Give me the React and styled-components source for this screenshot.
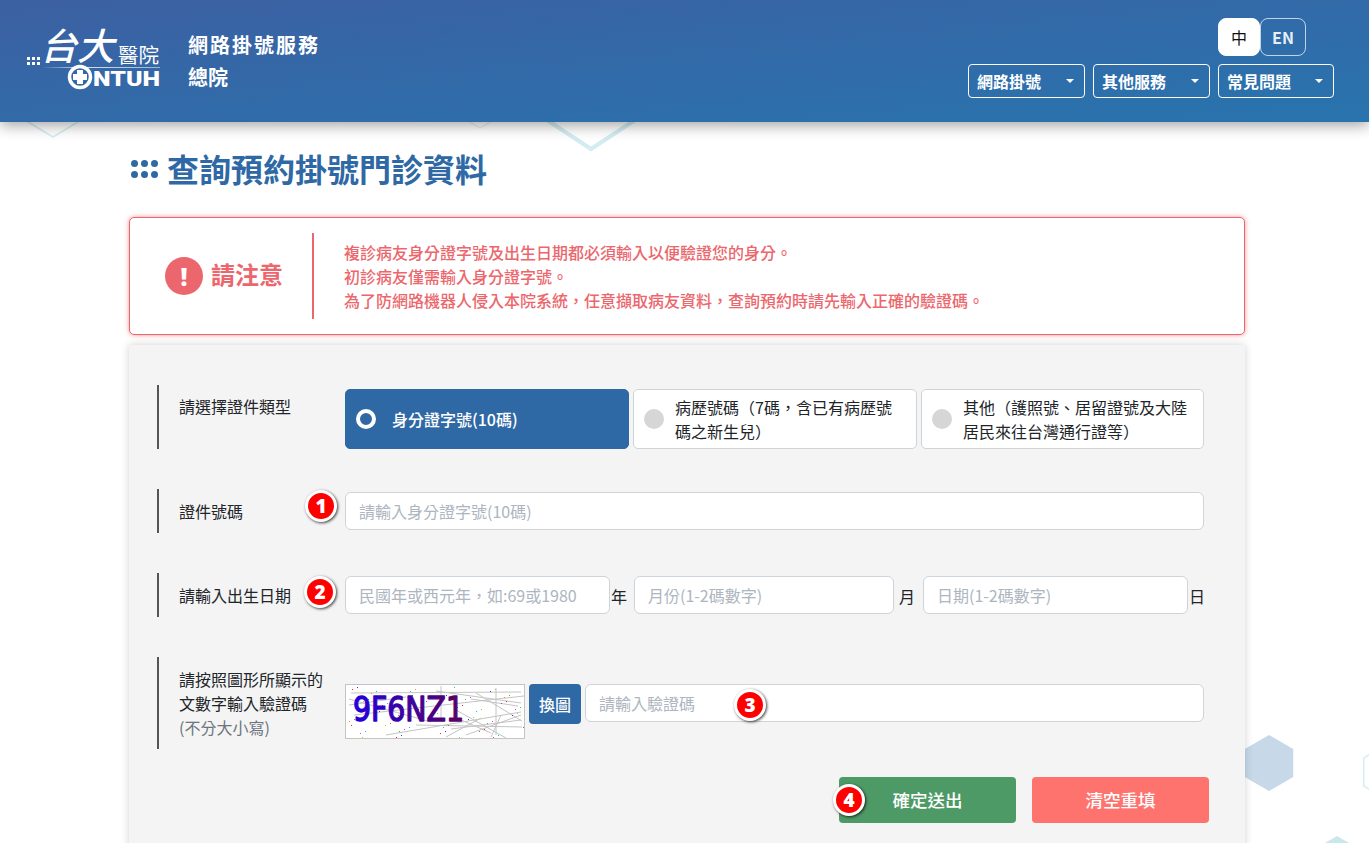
import React from "react";
import styled, { createGlobalStyle } from "styled-components";

const Global = createGlobalStyle`
  html, body { margin: 0; padding: 0; background: #fff; overflow: hidden; }
  * { box-sizing: border-box; }
  body { font-family: "Noto Sans CJK TC", "Noto Sans", sans-serif; color: #212529; }
`;

const Page = styled.div`
  position: relative;
  height: 843px;
  overflow: hidden;
  background: #fff;
`;

const Deco = styled.svg`
  position: absolute;
  left: 0;
  top: 0;
  width: 1369px;
  height: 843px;
`;

const Header = styled.header`
  position: relative;
  z-index: 2;
  height: 122px;
  display: flex;
  justify-content: space-between;
  background: linear-gradient(175deg, #3c60a2 0%, #2874ae 100%);
  box-shadow: 0 3px 14px rgba(0, 0, 0, 0.38);
  padding: 18px 35px 0 27px;
`;

const Brand = styled.div`
  display: flex;
  align-items: flex-start;
  gap: 28px;
`;

const LogoSvg = styled.svg`
  width: 133px;
  height: 72px;
  flex: none;
  overflow: visible;
`;

const SiteName = styled.div`
  color: #fff;
  font-size: 20px;
  font-weight: 700;
  line-height: 32px;
  padding-top: 11px;
`;

const SiteLine = styled.div`
  letter-spacing: ${(p) => p.$ls ?? 0}px;
`;

const HeaderRight = styled.div`
  display: flex;
  flex-direction: column;
  align-items: flex-end;
  gap: 8px;
`;

const Lang = styled.div`
  display: flex;
  width: 116px;
`;

const LangButton = styled.div`
  height: 38px;
  width: ${(p) => (p.$active ? 42 : 46)}px;
  display: flex;
  align-items: center;
  justify-content: center;
  font-size: 16px;
  font-weight: ${(p) => (p.$active ? 400 : 700)};
  border-radius: 8px;
  color: ${(p) => (p.$active ? "#111" : "#e6edf6")};
  background: ${(p) => (p.$active ? "#fff" : "transparent")};
  border: 1px solid ${(p) => (p.$active ? "#fff" : "rgba(255,255,255,.7)")};
`;

const Menus = styled.nav`
  display: flex;
  gap: 8px;
`;

const Menu = styled.div`
  width: ${(p) => p.$w}px;
  height: 34px;
  border: 1px solid #fff;
  border-radius: 4px;
  display: flex;
  align-items: center;
  justify-content: space-between;
  padding: 0 10px 0 8px;
  color: #fff;
  font-size: 16px;
  font-weight: 700;
`;

const Caret = styled.i`
  width: 0;
  height: 0;
  border-left: 4px solid transparent;
  border-right: 4px solid transparent;
  border-top: 4px solid #fff;
`;

const Main = styled.main`
  position: relative;
  z-index: 1;
  width: 1116px;
  margin-left: 129px;
`;

const TitleRow = styled.div`
  display: flex;
  align-items: center;
  gap: 9px;
  height: 95px;
  padding: 0 0 4px 2px;
`;

const TitleDots = styled.div`
  display: grid;
  grid-template-columns: repeat(3, 7px);
  column-gap: 3px;
  row-gap: 4px;
  margin-top: 3px;
`;

const TitleDot = styled.span`
  width: 7px;
  height: 7px;
  border-radius: 50%;
  background: #2f69a5;
`;

const Title = styled.h1`
  margin: 0;
  font-size: 32px;
  line-height: 40px;
  font-weight: 700;
  color: #2f69a5;
`;

const Alert = styled.section`
  height: 118px;
  background: #fff;
  border: 1px solid #ec666d;
  border-radius: 5px;
  box-shadow: 0 0 5px rgba(236, 102, 109, 0.7);
  display: flex;
  align-items: center;
  padding-left: 35px;
`;

const AlertHead = styled.div`
  width: 147px;
  height: 84px;
  display: flex;
  align-items: center;
  gap: 8px;
  flex: none;
`;

const AlertIcon = styled.div`
  width: 38px;
  height: 38px;
  border-radius: 50%;
  background: #ec676d;
  color: #fff;
  font-size: 24px;
  font-weight: 900;
  display: flex;
  align-items: center;
  justify-content: center;
  flex: none;
  font-family: "Noto Sans", sans-serif;
`;

const AlertTitle = styled.div`
  color: #ec676d;
  font-size: 24px;
  font-weight: 700;
  line-height: 1;
  margin-top: -4px;
`;

const AlertBody = styled.div`
  border-left: 2px solid #ec676d;
  height: 86px;
  padding-left: 30px;
  padding-top: 7px;
  color: #ec676d;
  font-size: 16px;
  font-weight: 500;
  line-height: 24px;
`;

const Panel = styled.section`
  margin-top: 10px;
  height: 560px;
  background: #f4f4f4;
  box-shadow: 0 0 8px rgba(0, 0, 0, 0.18);
  padding: 40px 41px 0 28px;
  display: flex;
  flex-direction: column;
  gap: 40px;
`;

const Row = styled.div`
  display: flex;
  min-height: ${(p) => p.$h}px;
`;

const Label = styled.div`
  width: 188px;
  flex: none;
  border-left: 2px solid #555;
  padding: ${(p) => p.$top ?? 0}px 12px 0 20px;
  display: flex;
  flex-direction: column;
  justify-content: ${(p) => (p.$center ? "center" : "flex-start")};
  font-size: 16px;
  line-height: 24px;
  color: #212529;
`;

const Hint = styled.span`
  color: #6c757d;
`;

const Field = styled.div`
  position: relative;
  flex: 1;
  display: flex;
  align-items: flex-start;
  padding-top: ${(p) => p.$top}px;
`;

const Options = styled.div`
  display: grid;
  grid-template-columns: 284px 284px 283px;
  gap: 4px;
  flex: 1;
`;

const Option = styled.div`
  height: 60px;
  display: flex;
  align-items: center;
  gap: ${(p) => (p.$on ? 16 : 11)}px;
  padding: 0 14px 0 10px;
  border-radius: 5px;
  background: ${(p) => (p.$on ? "#2f69a5" : "#fff")};
  border: 1px solid ${(p) => (p.$on ? "#2f69a5" : "#ced4da")};
  color: ${(p) => (p.$on ? "#fff" : "#212529")};
  font-size: 16px;
  font-weight: ${(p) => (p.$on ? 500 : 400)};
  line-height: 24px;
`;

const Radio = styled.span`
  width: 20px;
  height: 20px;
  border-radius: 50%;
  flex: none;
  background: ${(p) => (p.$on ? "transparent" : "#d6d6d6")};
  border: ${(p) => (p.$on ? "4px solid #fff" : "none")};
`;

const Input = styled.input`
  flex: ${(p) => (p.$w ? "none" : 1)};
  width: ${(p) => (p.$w ? `${p.$w}px` : "auto")};
  min-width: 0;
  height: 38px;
  background: #fff;
  border: 1px solid #ced4da;
  border-radius: 6px;
  padding: 0 13px;
  font-family: inherit;
  font-size: 16px;
  outline: none;
  &::placeholder { color: #adb5c0; opacity: 1; }
`;

const Unit = styled.span`
  flex: none;
  width: ${(p) => p.$w}px;
  height: 38px;
  line-height: 40px;
  padding-left: ${(p) => p.$pl ?? 1}px;
  font-size: 16px;
  color: #212529;
`;

const Badge = styled.span`
  position: absolute;
  left: ${(p) => p.$x}px;
  top: ${(p) => p.$y}px;
  width: 32px;
  height: 32px;
  border-radius: 50%;
  background: #f00;
  border: 3px solid #fff;
  box-shadow: 1px 1px 3px rgba(0, 0, 0, 0.75);
  color: #fff;
  font-family: "Noto Sans", sans-serif;
  font-size: 19px;
  font-weight: 900;
  line-height: 26px;
  text-align: center;
  z-index: 2;
`;

const CaptchaSvg = styled.svg`
  width: 180px;
  height: 55px;
  flex: none;
  border: 1px solid #c4c4c4;
  background: #fff;
`;

const SwapButton = styled.div`
  width: 52px;
  height: 40px;
  margin: 0 4px;
  flex: none;
  border-radius: 4px;
  background: #2f69a5;
  color: #fff;
  font-size: 16px;
  font-weight: 500;
  display: flex;
  align-items: center;
  justify-content: center;
`;

const Actions = styled.div`
  position: relative;
  display: flex;
  justify-content: flex-end;
  gap: 16px;
  margin: -12px -5px 0 0;
`;

const Action = styled.div`
  width: ${(p) => p.$w}px;
  height: 46px;
  padding-bottom: 2px;
  border-radius: 4px;
  background: ${(p) => p.$bg};
  color: #fff;
  font-size: 17.5px;
  font-weight: 500;
  display: flex;
  align-items: center;
  justify-content: center;
`;

const Lines = [
  [3,14,85,37],[8,30,178,11],[95,1,95,36],[90,6,175,18],[120,50,175,30],[40,50,175,27],
  [130,8,176,36],[150,3,150,50],[3,20,60,12],[70,40,176,42],[110,25,160,53],[135,33,100,52],[5,8,175,7],
  [125,14,172,21],[115,35,145,48],[155,30,145,52],[105,44,175,35]
];
const DotColors = ["#f22","#3c3","#33f","#e3e","#cc0","#0cc","#777","#f90"];
const Dots = Array.from({ length: 70 }, (_, i) => ({
  x: (i * 47 + 5) % 177 + 1,
  y: (i * i * 13 + i * 29 + 3) % 52 + 1,
  c: DotColors[i % 8],
}));

function Captcha() {
  return (
    <CaptchaSvg viewBox="0 0 178 53">
      <defs>
        <linearGradient id="cap" x1="0" x2="1" y1="0" y2="0">
          <stop offset="0" stopColor="#2200dd" />
          <stop offset="1" stopColor="#5a0060" />
        </linearGradient>
      </defs>
      {Lines.map((l, i) => (
        <line key={i} x1={l[0]} y1={l[1]} x2={l[2]} y2={l[3]} stroke="#c4c4c4" strokeWidth="1" />
      ))}
      {Dots.map((d, i) => (
        <rect key={i} x={d.x} y={d.y} width="1" height="1" fill={d.c} />
      ))}
      <text x="7" y="36" fill="url(#cap)" stroke="url(#cap)" strokeWidth="1.4" strokeLinejoin="round" fontFamily="DejaVu Sans" fontWeight="400" fontSize="33" textLength="111" lengthAdjust="spacingAndGlyphs">9F6NZ1</text>
    </CaptchaSvg>
  );
}

function Logo() {
  return (
    <LogoSvg viewBox="0 0 133 72">
      <defs>
        <linearGradient id="rule" x1="0" x2="1" y1="0" y2="0">
          <stop offset="0" stopColor="#fff" stopOpacity="0" />
          <stop offset="0.35" stopColor="#fff" stopOpacity=".8" />
          <stop offset="1" stopColor="#fff" stopOpacity=".5" />
        </linearGradient>
      </defs>
      {[0, 5, 10].map((x) => [39, 44].map((y) => (
        <rect key={`${x}-${y}`} x={x} y={y} width="3" height="3" fill="#fff" />
      )))}
      <text x="13" y="42" fill="#fff" fontFamily="Noto Sans CJK TC" fontWeight="500" fontSize="37" fontStyle="italic">台大</text>
      <text x="91" y="45" fill="#fff" fontFamily="Noto Sans CJK TC" fontWeight="400" fontSize="20.5">醫院</text>
      <rect x="14" y="49" width="119" height="1" fill="url(#rule)" />
      <circle cx="53" cy="59" r="10.5" fill="none" stroke="#fff" strokeWidth="3.5" />
      <path d="M50 52h6v4h4v6h-4v4h-6v-4h-4v-6h4z" fill="#fff" />
      <text x="66" y="68" fill="#fff" fontFamily="Roboto" fontWeight="900" fontSize="19.5" textLength="67" lengthAdjust="spacingAndGlyphs">NTUH</text>
    </LogoSvg>
  );
}

const hex = (cx, cy, r) =>
  [0, 1, 2, 3, 4, 5]
    .map((i) => {
      const a = (Math.PI / 3) * i - Math.PI / 2;
      return `${cx + r * Math.cos(a)},${cy + r * Math.sin(a)}`;
    })
    .join(" ");

export default function App() {
  return (
    <Page>
      <Global />
      <Deco viewBox="0 0 1369 843">
        <polyline points="25,120 53,137 81,120" fill="none" stroke="#d6eef2" strokeWidth="1.5" />
        <polyline points="466,120 480,128 494,120" fill="none" stroke="#dcebf2" strokeWidth="1" />
        <polyline points="547,120 591,149 635,120" fill="none" stroke="#d2ecf1" strokeWidth="4" />
        <polygon points={hex(1269, 763, 28)} fill="#c7d9e9" />
        <polygon points={hex(1337, 862, 26)} fill="#c9e8ec" />
        <polygon points={hex(1388, 772, 28)} fill="none" stroke="#d6eef2" strokeWidth="1.5" />
      </Deco>
      <Header>
        <Brand>
          <Logo />
          <SiteName>
            <SiteLine $ls={2}>網路掛號服務</SiteLine>
            <SiteLine>總院</SiteLine>
          </SiteName>
        </Brand>
        <HeaderRight>
          <Lang>
            <LangButton $active>中</LangButton>
            <LangButton>EN</LangButton>
          </Lang>
          <Menus>
            <Menu $w={117}>網路掛號<Caret /></Menu>
            <Menu $w={117}>其他服務<Caret /></Menu>
            <Menu $w={116}>常見問題<Caret /></Menu>
          </Menus>
        </HeaderRight>
      </Header>
      <Main>
        <TitleRow>
          <TitleDots>
            {Array.from({ length: 6 }, (_, i) => <TitleDot key={i} />)}
          </TitleDots>
          <Title>查詢預約掛號門診資料</Title>
        </TitleRow>
        <Alert>
          <AlertHead>
            <AlertIcon>!</AlertIcon>
            <AlertTitle>請注意</AlertTitle>
          </AlertHead>
          <AlertBody>
            複診病友身分證字號及出生日期都必須輸入以便驗證您的身分。
            <br />
            初診病友僅需輸入身分證字號。
            <br />
            為了防網路機器人侵入本院系統，任意擷取病友資料，查詢預約時請先輸入正確的驗證碼。
          </AlertBody>
        </Alert>
        <Panel>
          <Row $h={64}>
            <Label $top={9}>請選擇證件類型</Label>
            <Field $top={4}>
              <Options>
                <Option $on><Radio $on />身分證字號(10碼)</Option>
                <Option><Radio />病歷號碼（7碼，含已有病歷號碼之新生兒）</Option>
                <Option><Radio />其他（護照號、居留證號及大陸居民來往台灣通行證等）</Option>
              </Options>
            </Field>
          </Row>
          <Row $h={44}>
            <Label $center>證件號碼</Label>
            <Field $top={3}>
              <Badge $x={-40} $y={1}>1</Badge>
              <Input placeholder="請輸入身分證字號(10碼)" />
            </Field>
          </Row>
          <Row $h={44}>
            <Label $center>請輸入出生日期</Label>
            <Field $top={3}>
              <Badge $x={-41} $y={3}>2</Badge>
              <Input $w={265} placeholder="民國年或西元年，如:69或1980" />
              <Unit $w={24}>年</Unit>
              <Input $w={260} placeholder="月份(1-2碼數字)" />
              <Unit $w={29} $pl={5}>月</Unit>
              <Input $w={265} placeholder="日期(1-2碼數字)" />
              <Unit $w={16}>日</Unit>
            </Field>
          </Row>
          <Row $h={92}>
            <Label $center>
              請按照圖形所顯示的
              <br />
              文數字輸入驗證碼
              <Hint>(不分大小寫)</Hint>
            </Label>
            <Field $top={27}>
              <Captcha />
              <SwapButton>換圖</SwapButton>
              <Input placeholder="請輸入驗證碼" />
              <Badge $x={389} $y={32}>3</Badge>
            </Field>
          </Row>
          <Actions>
            <Action $w={177} $bg="#4e9a66">確定送出</Action>
            <Action $w={177} $bg="#fe736e">清空重填</Action>
            <Badge $x={676} $y={7}>4</Badge>
          </Actions>
        </Panel>
      </Main>
    </Page>
  );
}
